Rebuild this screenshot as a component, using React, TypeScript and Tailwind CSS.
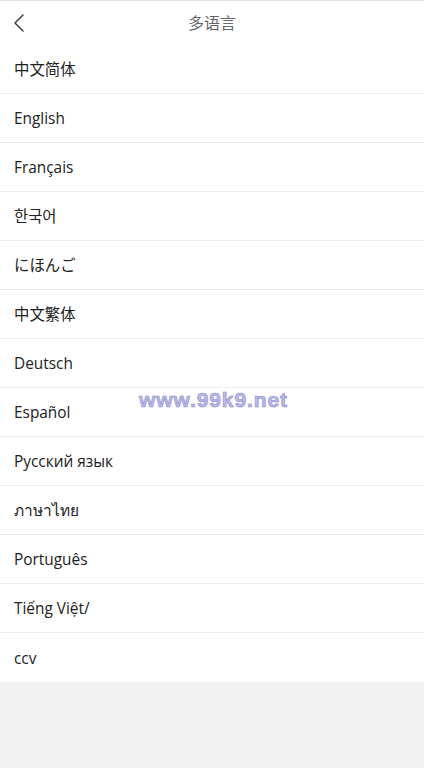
import React from 'react';

const languages = [
  '中文简体',
  'English',
  'Français',
  '한국어',
  'にほんご',
  '中文繁体',
  'Deutsch',
  'Español',
  'Русский язык',
  'ภาษาไทย',
  'Português',
  'Tiếng Việt/',
  'ccv',
];

const App = () => {
  return (
    <div
      className="relative min-h-[768px] w-full bg-[#f2f2f2]"
      style={{ fontFamily: '"Open Sans", "Noto Sans", "Noto Sans CJK SC", sans-serif' }}
    >
      {/* Header */}
      <div className="flex h-[45px] items-center border-t border-[#e5e5e5] bg-white px-[12px]">
        <button className="flex h-[24px] w-[24px] items-center text-[#333]">
          <svg width="14" height="20" viewBox="0 0 14 20" fill="none">
            <path d="M11 2 L3 10 L11 18" stroke="#444" strokeWidth="1.6" strokeLinecap="round" strokeLinejoin="round" />
          </svg>
        </button>
        <div className="flex-1 text-center text-[16px] text-[#666] mr-[24px]">多语言</div>
      </div>

      {/* Language list */}
      <div className="bg-white">
        {languages.map((lang, i) => (
          <div
            key={lang}
            className={`flex h-[49px] items-center px-[14px] pt-[2px] text-[15.4px] text-[#222] ${
              i < languages.length - 1 ? 'border-b border-[#eeeeee]' : ''
            }`}
          >
            {lang}
          </div>
        ))}
      </div>

      {/* Watermark */}
      <div
        className="absolute left-[139px] top-[384px] text-[21px] font-bold tracking-[0.9px] text-[#b9b9ea]"
        style={{ fontFamily: '"Liberation Sans", Arial, sans-serif', WebkitTextStroke: '0.6px #8c8cc8' }}
      >
        www.99k9.net
      </div>
    </div>
  );
};

export default App;
